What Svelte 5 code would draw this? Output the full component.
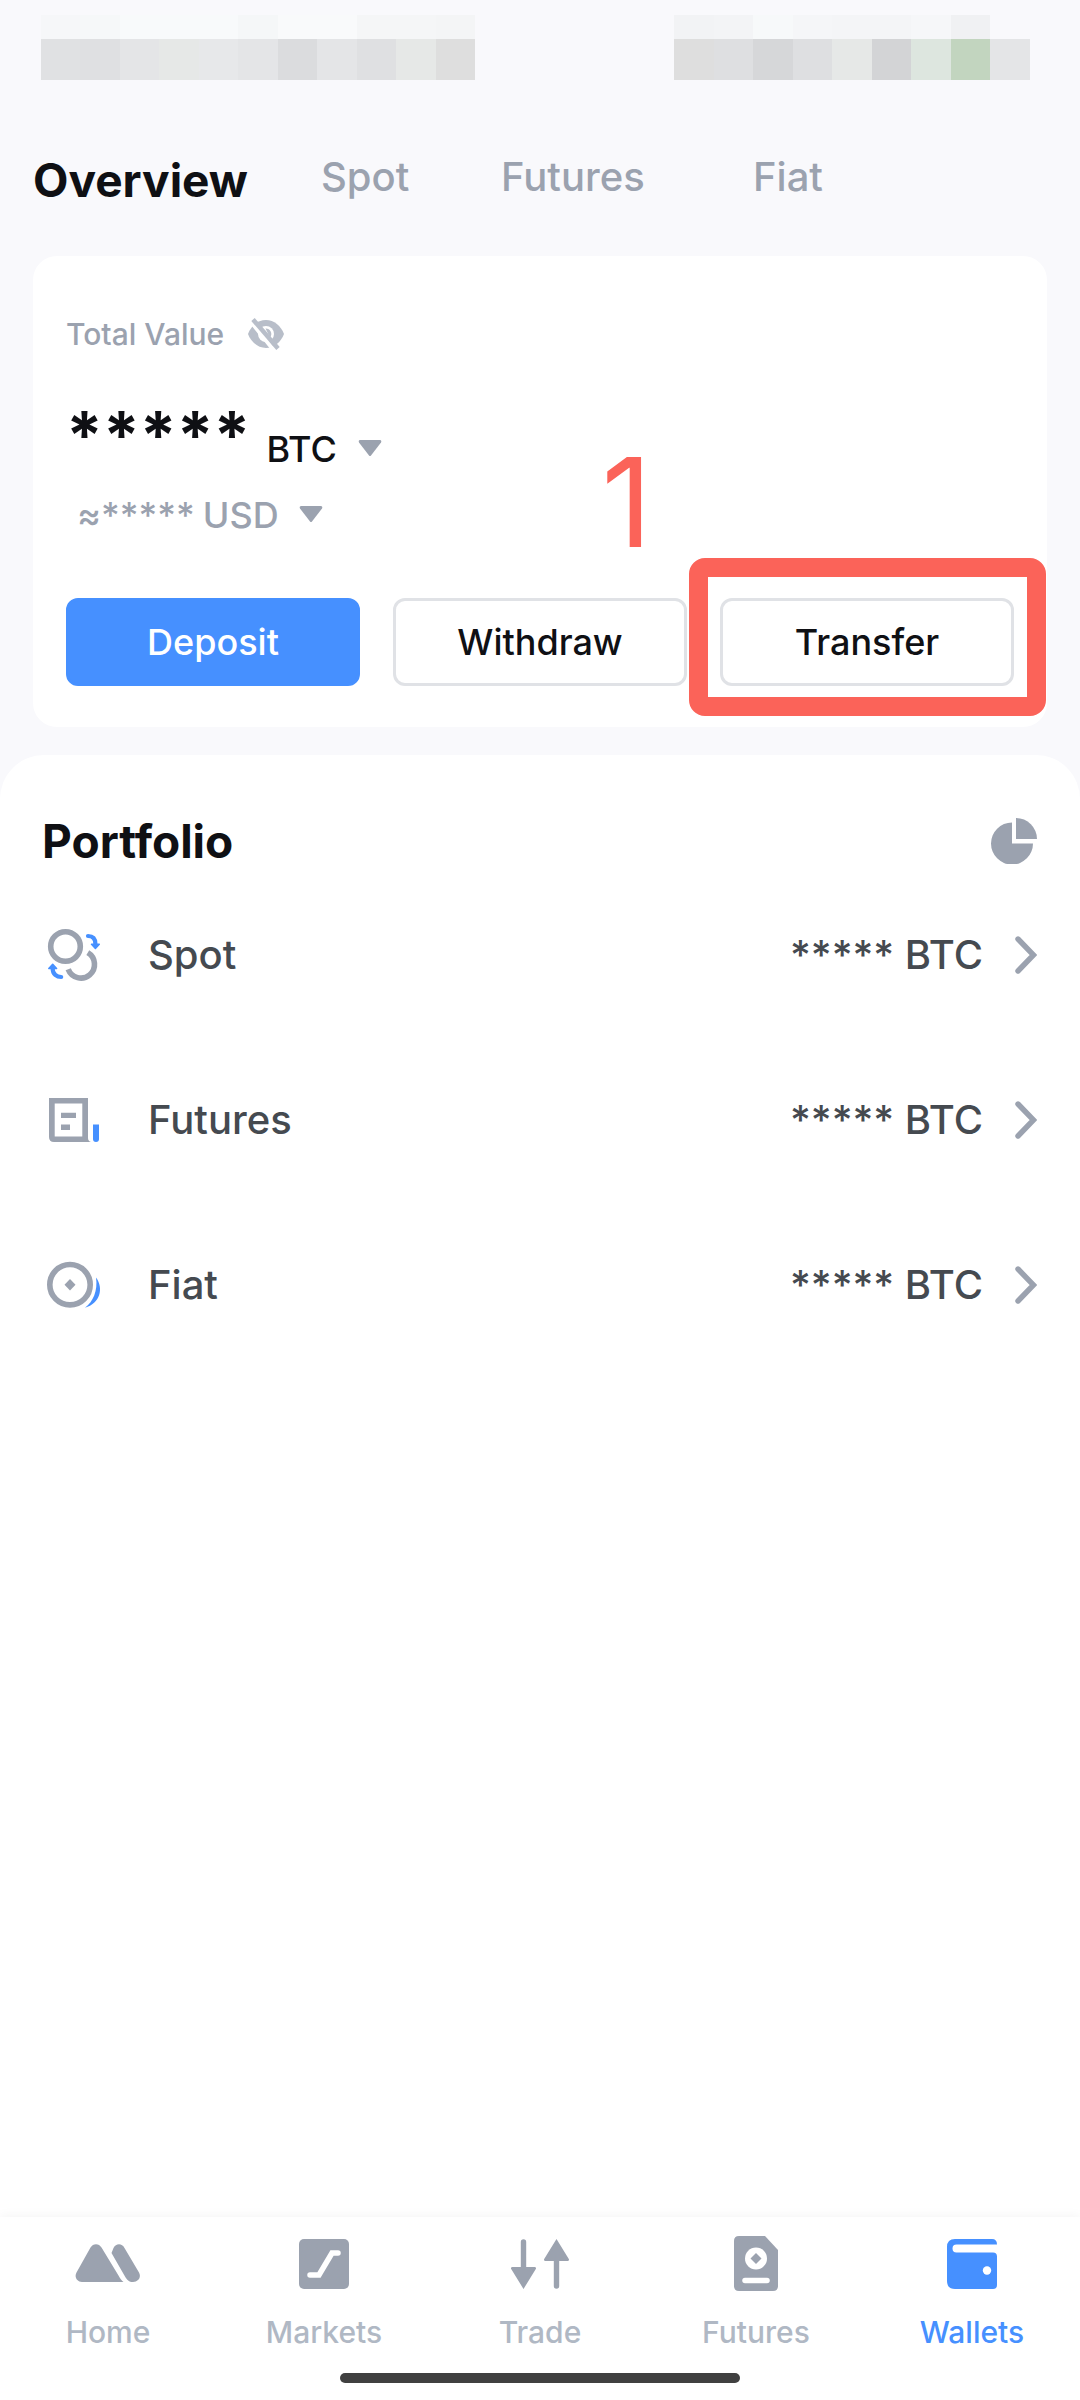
<script lang="ts">
  const tabs = ["Overview", "Spot", "Futures", "Fiat"];
  const portfolio = ["Spot", "Futures", "Fiat"];
  const navItems = ["Home", "Markets", "Trade", "Futures", "Wallets"];

  let activeTab = $state("Overview");
  let activeNav = $state("Wallets");

  // mosaic tiles that hide the clock and the signal icons
  const clockTiles = [
    ["#f6f7f9", "#e0e1e3"],
    ["#f6f8f9", "#dfe0e2"],
    ["#f8fafb", "#e4e5e7"],
    ["#f8fafb", "#e6e8e7"],
    ["#f8fafb", "#e7e8ea"],
    ["#f5f7f8", "#e4e5e7"],
    ["#f9fafb", "#dbdcde"],
    ["#f9fafb", "#e4e5e7"],
    ["#f5f6f7", "#dfe0e2"],
    ["#f5f6f7", "#e6e8e7"],
    ["#f4f5f6", "#dedede"],
  ];
  const signalTiles = [
    ["#f2f3f5", "#dedede"],
    ["#f3f4f6", "#dedfe1"],
    ["#f7f9fa", "#d6d7d9"],
    ["#f5f6f8", "#dedfe1"],
    ["#f4f5f7", "#e6e8e7"],
    ["#f4f5f7", "#d3d4d6"],
    ["#f6f7f9", "#dde6df"],
    ["#f0f1f3", "#c2d5bf"],
    ["#f9f9fc", "#e4e5e7"],
  ];
</script>

{#snippet tiles(list: string[][])}
  <svg
    viewBox="0 0 {list.length * 40} 65"
    preserveAspectRatio="none"
    shape-rendering="crispEdges"
    aria-hidden="true"
  >
    {#each list as [top, bottom], i}
      <rect x={i * 40} y="0" width="40" height="24" fill={top} />
      <rect x={i * 40} y="24" width="40" height="41" fill={bottom} />
    {/each}
  </svg>
{/snippet}

{#snippet caret()}
  <svg class="caret" width="24" height="22" viewBox="0 0 24 22" aria-hidden="true">
    <path d="M2 0h20q2 .5 1 2.500L13 15.500q-1 1-2 0L1 2.500Q0 .5 2 0z" fill="#9ba2af" />
  </svg>
{/snippet}

<div class="app">
  <header class="status">
    <div class="clock">{@render tiles(clockTiles)}</div>
    <div class="signal">{@render tiles(signalTiles)}</div>
  </header>

  <nav class="tabs" aria-label="Wallet sections">
    {#each tabs as tab}
      <button
        type="button"
        class:active={activeTab === tab}
        onclick={() => (activeTab = tab)}>{tab}</button
      >
    {/each}
  </nav>

  <section class="balance">
    <div class="total">
      <span>Total Value</span>
      <button type="button" aria-label="Show balance">
        <svg width="36" height="34" viewBox="0 0 36 34" aria-hidden="true">
          <path
            d="M18 3C10 3 3 9 0 17c3 8 10 14 18 14s15-6 18-14C33 9 26 3 18 3z"
            fill="#b8bec9"
          />
          <circle cx="18" cy="17" r="8" fill="#fff" />
          <path d="M17.500 11.500a5.500 5.500 0 0 1 4.500 9z" fill="#b8bec9" />
          <path d="M2 3.500 28 36" stroke="#fff" stroke-width="4" />
          <path d="M5 2.500 30 31.500" stroke="#b8bec9" stroke-width="4.500" />
        </svg>
      </button>
    </div>

    <div class="amount">
      <strong>*****</strong>
      <label class="currency">
        <select aria-label="Balance currency">
          <option>BTC</option>
        </select>
        {@render caret()}
      </label>
    </div>

    <div class="fiat-amount">
      <span>≈*****</span>
      <label class="currency">
        <select aria-label="Fiat currency">
          <option>USD</option>
        </select>
        {@render caret()}
      </label>
    </div>

    <div class="actions">
      <button type="button" class="primary">Deposit</button>
      <button type="button">Withdraw</button>
      <div class="step">
        <button type="button">Transfer</button>
        <span class="step-frame"></span>
        <span class="step-number">1</span>
      </div>
    </div>
  </section>

  <main class="sheet">
    <div class="sheet-header">
      <h2>Portfolio</h2>
      <button type="button" aria-label="Allocation chart">
        <svg width="46" height="46" viewBox="0 0 46 46" aria-hidden="true">
          <path d="M21 4.500A21 21 0 1 0 42 25.500H21z" fill="#9ba2af" />
          <path d="M25 0a21 21 0 0 1 21 21H25z" fill="#9ba2af" />
        </svg>
      </button>
    </div>

    {#each portfolio as name}
      <a class="row" href="#{name.toLowerCase()}">
        <svg width="60" height="60" viewBox="0 0 60 60" fill="none" aria-hidden="true">
          {#if name === "Spot"}
            <circle cx="20.500" cy="21.500" r="14.800" stroke="#9ba2af" stroke-width="5.600" />
            <path
              d="M42.800 27.700A13.600 13.600 0 1 1 23.200 44.300"
              stroke="#9ba2af"
              stroke-width="5.600"
            />
            <path
              d="M43 11c5 0 7.400 3 7.400 8M7.700 44c0 5 4 8 8.500 8"
              stroke="#4690ff"
              stroke-width="4.200"
              stroke-linecap="round"
            />
            <path
              d="M46.500 19.300h7.800l-3.900 4.200zM3.800 43.500h7.800l-3.900-4.200z"
              fill="#4690ff"
              stroke="#4690ff"
              stroke-width="1.500"
              stroke-linejoin="round"
            />
          {:else if name === "Futures"}
            <path
              fill-rule="evenodd"
              d="M4 8h39v40q0 3 3 4H9q-5 0-5-5zM9.700 13.500v33h27.600v-33z"
              fill="#9ba2af"
            />
            <path d="M16 22.700h15V28H16zM16 34.500h9V40h-9z" fill="#9ba2af" />
            <path d="M48 34.500h6V49q0 3-3 3t-3-3z" fill="#4690ff" />
          {:else}
            <circle cx="25" cy="29.700" r="20.200" stroke="#9ba2af" stroke-width="5.600" />
            <path d="m25 24 5.500 5.700L25 35.400l-5.500-5.700z" fill="#9ba2af" />
            <path d="M51 22.500c8 11 4 26-11 30.300 8-6 13-17 11-30.300z" fill="#4690ff" />
          {/if}
        </svg>
        <span class="name">{name}</span>
        <span class="value">***** BTC</span>
        <svg width="22" height="38" viewBox="0 0 22 38" fill="none" aria-hidden="true">
          <path
            d="M3 3l15.500 16L3 35"
            stroke="#9ba2af"
            stroke-width="5.400"
            stroke-linecap="round"
          />
        </svg>
      </a>
    {/each}
  </main>

  <nav class="bottom-nav" aria-label="Main">
    <div class="nav-items">
      {#each navItems as item}
        <a
          href="#{item.toLowerCase()}"
          class:active={activeNav === item}
          onclick={() => (activeNav = item)}
        >
          <svg width="66" height="60" viewBox="0 0 66 60" fill="none" aria-hidden="true">
            {#if item === "Home"}
              <path
                d="M15.500 13.500c2.500-4.500 8.500-4.500 11 0l17 28c1.500 3 3 5 5 6.500H7c-5 0-8-5-5.500-9.500z"
                fill="currentColor"
              />
              <path
                d="M36.500 19l2-5c2.500-5 8.500-5 11 0L64 38.500c2.500 4.500-.5 9.500-6 9.500-4 0-6-2-8-5.500z"
                fill="currentColor"
              />
            {:else if item === "Markets"}
              <rect x="8" y="5" width="50" height="50" rx="5" fill="currentColor" />
              <path d="M19 41h9l13-22h6" stroke="#fff" stroke-width="5.500" stroke-linecap="round" />
            {:else if item === "Trade"}
              <path
                d="M16.500 8v28M49.500 24v28"
                stroke="currentColor"
                stroke-width="5.400"
                stroke-linecap="round"
              />
              <path
                d="M5 33h23q1.500.5.800 2L16.500 55 4.200 35q-.7-1.500.8-2zM38 27h23q1.500-.5.800-2L49.500 5 37.200 25q-.7 1.500.8 2z"
                fill="currentColor"
              />
            {:else if item === "Futures"}
              <path
                d="M16 2h26l13 14v36q0 5-5 5H16q-5 0-5-5V7q0-5 5-5z"
                fill="currentColor"
              />
              <circle cx="33" cy="24.500" r="11" fill="#fff" />
              <path d="m33 19 5.500 5.500L33 30l-5.500-5.500z" fill="currentColor" />
              <path d="M22 46.500h22" stroke="#fff" stroke-width="5.500" stroke-linecap="round" />
            {:else}
              <path
                d="M16 5h37q5 0 5 5.500H17.500a4 4 0 0 0 0 8H54q4 0 4 4V51q0 4-4 4H16q-8 0-8-8V13q0-8 8-8z"
                fill="currentColor"
              />
              <circle cx="48" cy="36.500" r="4.200" fill="#fff" />
            {/if}
          </svg>
          <span>{item}</span>
        </a>
      {/each}
    </div>
    <div class="home-bar"></div>
  </nav>
</div>

<style>
  :global(body) {
    margin: 0;
    background: #f9f9fc;
  }

  .app {
    display: flex;
    flex-direction: column;
    min-height: 100vh;
    font-family: Inter, "Liberation Sans", sans-serif;
    font-weight: 500;
    color: #0f1014;
  }

  button,
  select {
    padding: 0;
    border: 0;
    background: none;
    color: inherit;
    font: inherit;
    cursor: pointer;
  }

  a {
    color: inherit;
    text-decoration: none;
  }

  svg {
    display: block;
    flex: none;
  }

  .status {
    display: flex;
    justify-content: space-between;
    padding: 15px 50px 0 41px;
  }

  .status svg {
    width: 100%;
    height: 65px;
  }

  .clock {
    width: 434px;
  }

  .signal {
    width: 356px;
  }

  .tabs {
    display: grid;
    grid-template-columns: 288px 180px 252px auto;
    align-items: start;
    height: 60px;
    padding: 72px 33px 44px;
  }

  .tabs button {
    justify-self: start;
    color: #9ba2af;
    font-size: 40px;
  }

  .tabs .active {
    color: #0f1014;
    font-size: 46px;
    font-weight: 700;
  }

  .balance {
    margin: 0 33px;
    padding: 60px 33px 41px;
    border-radius: 24px;
    background: #fff;
  }

  .total {
    display: flex;
    align-items: center;
    gap: 24px;
    color: #9ba2af;
    font-size: 30px;
    line-height: 36px;
  }

  .amount,
  .fiat-amount {
    display: flex;
    align-items: flex-end;
    font-size: 36px;
    line-height: 44px;
  }

  .amount {
    gap: 16px;
    margin-top: 47px;
  }

  .amount strong {
    font-size: 66px;
    font-weight: 700;
    line-height: 72px;
  }

  .fiat-amount {
    gap: 8px;
    margin-top: 22px;
    padding-left: 11px;
    color: #9ba2af;
  }

  .currency {
    display: flex;
    align-items: baseline;
    gap: 20px;
  }

  .currency select {
    height: 44px;
    appearance: none;
  }

  .actions {
    display: grid;
    grid-template-columns: repeat(3, 1fr);
    gap: 33px;
    margin-top: 61px;
  }

  .actions button {
    box-sizing: border-box;
    width: 100%;
    height: 88px;
    border: 3px solid #e0e2e6;
    border-radius: 12px;
    font-size: 36px;
  }

  .actions .primary {
    border-color: #4690ff;
    background: #4690ff;
    color: #fff;
  }

  .step {
    position: relative;
  }

  .step-frame {
    position: absolute;
    inset: -40px -32px -30px -31px;
    border: 19px solid #fb6359;
    border-radius: 16px;
    pointer-events: none;
  }

  .step-number {
    position: absolute;
    right: 100%;
    bottom: 100%;
    margin: 0 68px 16px 0;
    color: #fb6359;
    font-size: 124px;
    font-weight: 400;
    line-height: 160px;
  }

  .sheet {
    flex: 1;
    margin-top: 28px;
    padding: 55px 43px 0 45px;
    border-radius: 44px 44px 0 0;
    background: #fff;
  }

  .sheet-header {
    display: flex;
    align-items: center;
    justify-content: space-between;
    height: 62px;
  }

  .sheet-header h2 {
    margin: 0 0 0 -3px;
    font-size: 46px;
    font-weight: 700;
  }

  .row {
    display: flex;
    align-items: center;
    height: 165px;
    color: #454a50;
    font-size: 40px;
  }

  .name {
    margin-left: 43px;
  }

  .value {
    margin: 0 32px 0 auto;
  }

  .bottom-nav {
    padding: 17px 0;
    background: #fff;
    box-shadow: 0 -2px 10px rgba(0, 0, 0, 0.04);
  }

  .nav-items {
    display: grid;
    grid-template-columns: repeat(5, 1fr);
  }

  .nav-items a {
    display: flex;
    flex-direction: column;
    align-items: center;
    gap: 20px;
    color: #9ba2af;
    font-size: 30px;
    line-height: 36px;
  }

  .nav-items span {
    color: #b0b8c4;
  }

  .nav-items .active,
  .nav-items .active span {
    color: #4690ff;
  }

  .home-bar {
    width: 37%;
    height: 10px;
    margin: 23px auto 0;
    border-radius: 5px;
    background: #404040;
  }
</style>
